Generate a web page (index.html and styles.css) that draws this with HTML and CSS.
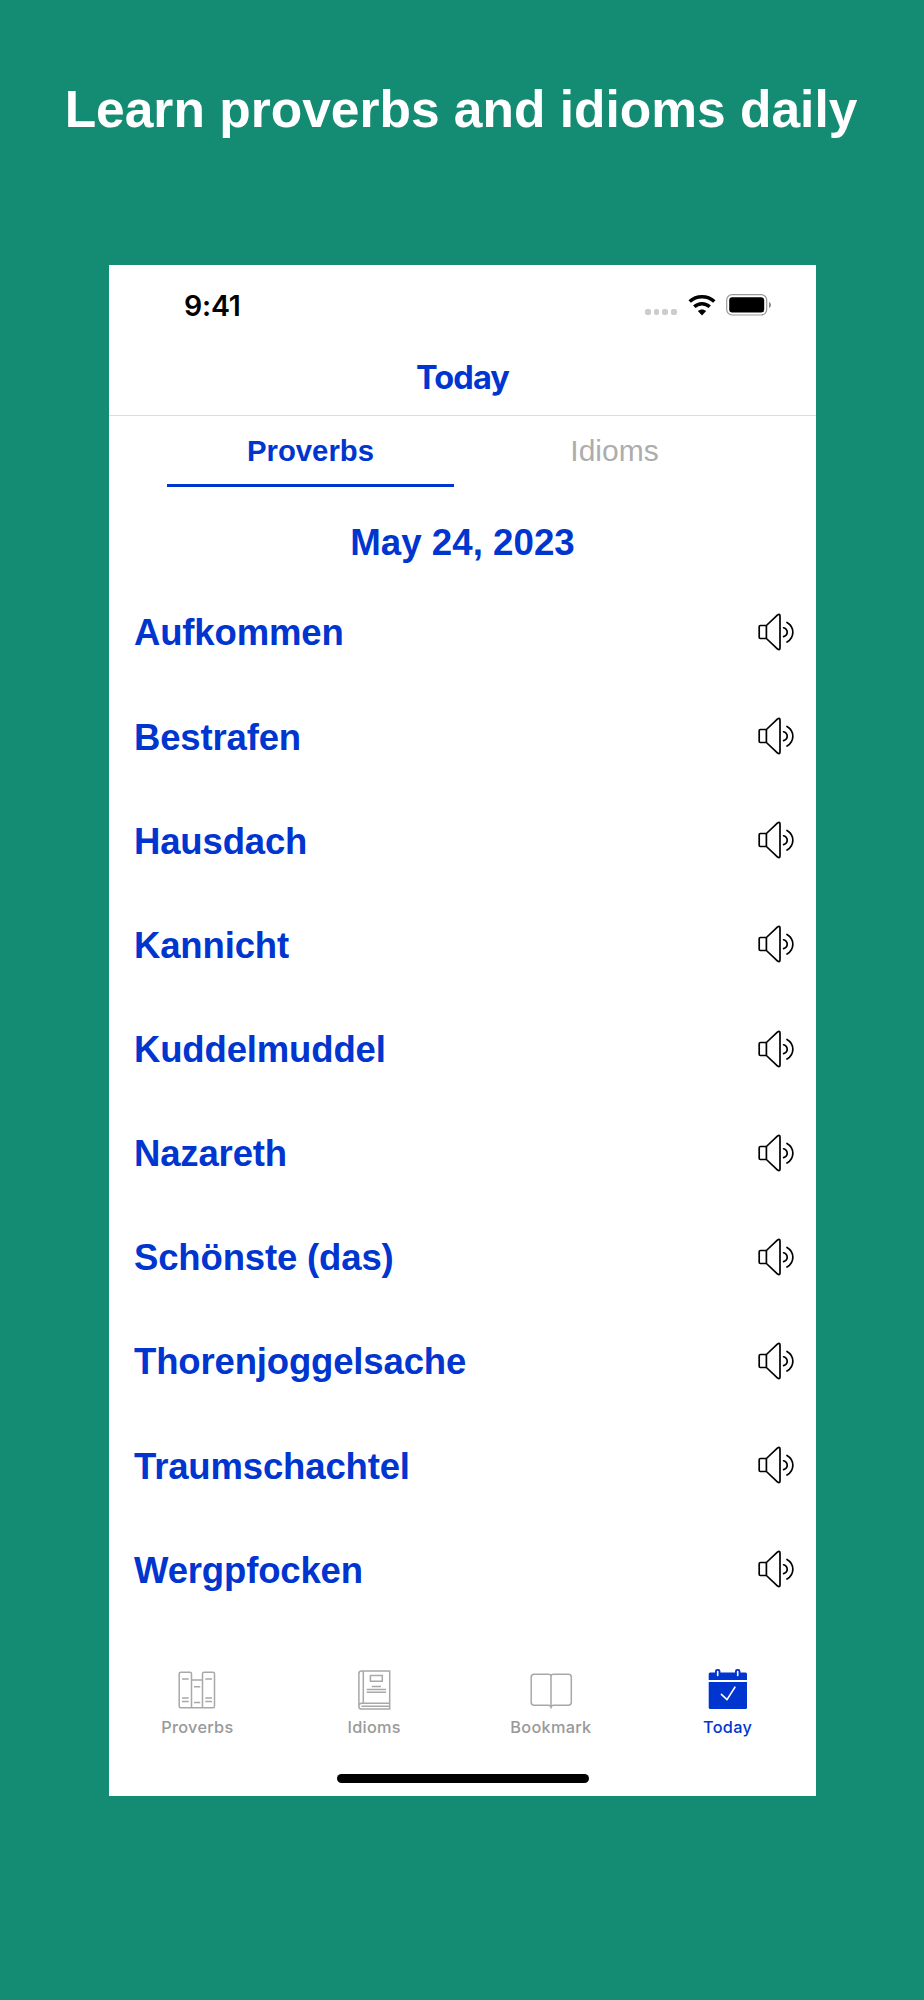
FILE: index.html
```
<!DOCTYPE html>
<html lang="en">
<head>
    <meta charset="UTF-8">
    <meta name="viewport" content="width=device-width, initial-scale=1.0">
    <title>Learn proverbs and idioms daily</title>
    <link rel="stylesheet" href="styles.css">
</head>
<body>

<!-- Shared speaker icon -->
<svg class="sprite" width="0" height="0">
    <symbol id="speaker" viewBox="0 0 40 40">
        <path d="M10.4 13.5H4.4Q3.2 13.5 3.2 14.7V25.3Q3.2 26.5 4.4 26.5H10.4ZM10.4 13.5L21.6 2.9Q24 1.6 24 4V36Q24 38.4 21.6 37.1L10.4 26.5"/>
        <path d="M27.6 15.8C32.4 17.4 32.4 23 27.6 24.6M31 10.4C38.8 15 38.8 25.4 31 30"/>
    </symbol>
</svg>

<h1 class="headline">Learn proverbs and idioms daily</h1>

<div class="phone">
    <div class="status">
        <span class="time">9:41</span>
        <div class="status-icons">
            <div class="dots"><i></i><i></i><i></i><i></i></div>
            <svg class="wifi" width="28" height="21" viewBox="0 0 28 21">
                <path d="M1.7 6.6C8.5.2 19.5.2 26.3 6.6M6.3 11.7C10.7 7.6 17.3 7.6 21.7 11.7" fill="none" stroke="#000" stroke-width="3.5"/>
                <path d="M9.8 16.1C12.2 14 15.8 14 18.2 16.1L14 20.4Z" fill="#000"/>
            </svg>
            <svg class="battery" width="46" height="22" viewBox="0 0 46 22">
                <rect x=".7" y=".7" width="40" height="20.3" rx="5.4" fill="none" stroke="#999" stroke-width="1.2"/>
                <rect x="3.2" y="3.2" width="35" height="15.3" rx="3" fill="#000"/>
                <path d="M43 8C45.6 9 45.6 13 43 14Z" fill="#888"/>
            </svg>
        </div>
    </div>

    <div class="title">Today</div>

    <div class="tabs">
        <div class="tab active">Proverbs</div>
        <div class="tab">Idioms</div>
    </div>

    <div class="date">May 24, 2023</div>

    <ul class="words">
        <li>Aufkommen <svg class="speaker"><use href="#speaker"/></svg></li>
        <li>Bestrafen <svg class="speaker"><use href="#speaker"/></svg></li>
        <li>Hausdach <svg class="speaker"><use href="#speaker"/></svg></li>
        <li>Kannicht <svg class="speaker"><use href="#speaker"/></svg></li>
        <li>Kuddelmuddel <svg class="speaker"><use href="#speaker"/></svg></li>
        <li>Nazareth <svg class="speaker"><use href="#speaker"/></svg></li>
        <li>Schönste (das) <svg class="speaker"><use href="#speaker"/></svg></li>
        <li>Thorenjoggelsache <svg class="speaker"><use href="#speaker"/></svg></li>
        <li>Traumschachtel <svg class="speaker"><use href="#speaker"/></svg></li>
        <li>Wergpfocken <svg class="speaker"><use href="#speaker"/></svg></li>
    </ul>

    <div class="nav">
        <div class="nav-item">
            <svg class="nav-icon" viewBox="0 0 44 44">
                <path d="M16.5 41.7H5.7Q4.2 41.7 4.2 40.2V7.8Q4.2 6.3 5.7 6.3H15Q16.5 6.3 16.5 7.8ZM27.5 41.7V7.8Q27.5 6.3 29 6.3H38Q39.5 6.3 39.5 7.8V40.2Q39.5 41.7 38 41.7ZM16.5 14H27.5M16.5 41.7H27.5"/>
                <path d="M7 13H13.7M7 32H13.7M7 35.5H13.7M19 20.7H25.3M19 36.5H25.3M30.3 13H37M30.3 32H37M30.3 35.5H37"/>
            </svg>
            <span>Proverbs</span>
        </div>
        <div class="nav-item">
            <svg class="nav-icon" viewBox="0 0 44 44">
                <path d="M37.7 37.3V4.9H9.5Q6.9 4.9 6.9 7.5V40.4Q6.9 43 9.5 43H37.7V37.3H9.8Q6.9 37.3 6.9 40M11.3 5V37.3M9.5 40.2H37.7"/>
                <path d="M18.4 9.5H30.3V15.3H18.4ZM19.7 20.6H29M14.7 23.4H34M14.7 26.2H34"/>
            </svg>
            <span>Idioms</span>
        </div>
        <div class="nav-item">
            <svg class="nav-icon" viewBox="0 0 44 44">
                <path d="M22 10.3Q22 8.3 19.5 8.3H5.2Q2.2 8.3 2.2 11.3V36.2Q2.2 39.2 5.2 39.2H19.5Q22 39.2 22 41.5Q22 39.2 24.5 39.2H39.3Q42.3 39.2 42.3 36.2V11.3Q42.3 8.3 39.3 8.3H24.5Q22 8.3 22 10.3V42.5"/>
            </svg>
            <span>Bookmark</span>
        </div>
        <div class="nav-item selected">
            <svg class="nav-icon" viewBox="0 0 44 44">
                <path class="fill" d="M2.7 14V8Q2.7 6.5 4.2 6.5H39.5Q41 6.5 41 8V14Z"/>
                <path class="fill" d="M2.7 16H41V41.5Q41 43 39.5 43H4.2Q2.7 43 2.7 41.5Z"/>
                <rect class="fill" x="9" y="3.1" width="5.4" height="8" rx="2.2"/>
                <rect class="fill" x="29" y="3.1" width="5.4" height="8" rx="2.2"/>
                <path class="cut" d="M11.7 5.5V9.5M31.7 5.5V9.5M15.4 28.4L21 33.6L28.9 21.2"/>
            </svg>
            <span>Today</span>
        </div>
    </div>

    <div class="home-bar"></div>
</div>

</body>
</html>
```
FILE: styles.css
```
* {
    margin: 0;
    padding: 0;
    box-sizing: border-box;
}

body {
    background-color: #148c73;
    height: 2000px;
    font-family: "Liberation Sans", Arial, sans-serif;
    overflow: hidden;
}

.sprite {
    display: block;
}

.headline {
    height: 265.4px;
    padding: 79px 2px 0 0;
    color: #fff;
    font-size: 51.5px;
    line-height: 60px;
    text-align: center;
    white-space: nowrap;
}

.phone {
    display: flex;
    flex-direction: column;
    width: 707px;
    height: 1530.6px;
    margin-left: 109px;
    background-color: #fff;
    color: #0035cf;
}

.status {
    display: flex;
    justify-content: space-between;
    align-items: center;
    height: 80px;
    padding: 0 44px 0 75px;
    color: #000;
}

.time {
    font-family: Inter, sans-serif;
    font-size: 28.5px;
    font-weight: 600;
    letter-spacing: -0.2px;
}

.status-icons {
    display: flex;
    align-items: center;
}

.dots {
    display: flex;
    gap: 3px;
    margin: 14px 11px 0 0;
}

.dots i {
    width: 5.8px;
    height: 5.8px;
    border-radius: 2px;
    background-color: #ccc;
}

.battery {
    margin-left: 10px;
}

.title {
    height: 71px;
    border-bottom: 1.5px solid #dcdcdc;
    font-family: Inter, sans-serif;
    font-size: 32.5px;
    font-weight: 700;
    line-height: 65px;
    text-align: center;
    letter-spacing: -0.9px;
}

.tabs {
    display: flex;
    gap: 17px;
    padding: 0 58px;
}

.tab {
    width: 287px;
    height: 70.5px;
    color: #adadad;
    font-size: 30px;
    line-height: 70px;
    text-align: center;
}

.tab.active {
    border-bottom: 3px solid #0035cf;
    color: #0035cf;
    font-size: 29.3px;
    font-weight: bold;
}

.date {
    height: 93px;
    font-size: 36.7px;
    font-weight: bold;
    line-height: 112px;
    text-align: center;
}

.words {
    list-style: none;
}

.words li {
    display: flex;
    justify-content: space-between;
    align-items: center;
    height: 104.15px;
    padding: 3px 20px 0 25px;
    font-size: 36.5px;
    font-weight: bold;
    line-height: 46px;
    letter-spacing: -0.15px;
}

.speaker {
    width: 40px;
    height: 40px;
    margin-bottom: 3px;
    fill: none;
    stroke: #000;
    stroke-width: 1.7;
    stroke-linecap: round;
    stroke-linejoin: round;
}

.nav {
    display: flex;
    margin-top: 45px;
}

.nav-item {
    display: flex;
    flex: 1;
    flex-direction: column;
    align-items: center;
    color: #999;
    font-family: Inter, sans-serif;
    font-size: 16.3px;
    font-weight: 500;
    line-height: 20px;
    letter-spacing: 0.3px;
}

.nav-item span {
    margin-top: 7px;
}

.nav-icon {
    width: 44px;
    height: 44px;
    fill: none;
    stroke: #a8a8a8;
    stroke-width: 1.5;
}

.nav-item.selected {
    color: #0035cf;
}

.nav-icon .fill {
    fill: #0035cf;
    stroke: none;
}

.nav-icon .cut {
    stroke: #fff;
    stroke-width: 1.6;
    stroke-linecap: round;
    stroke-linejoin: round;
}

.home-bar {
    width: 252px;
    height: 8.5px;
    margin: auto auto 13px;
    border-radius: 5px;
    background-color: #000;
}
```
